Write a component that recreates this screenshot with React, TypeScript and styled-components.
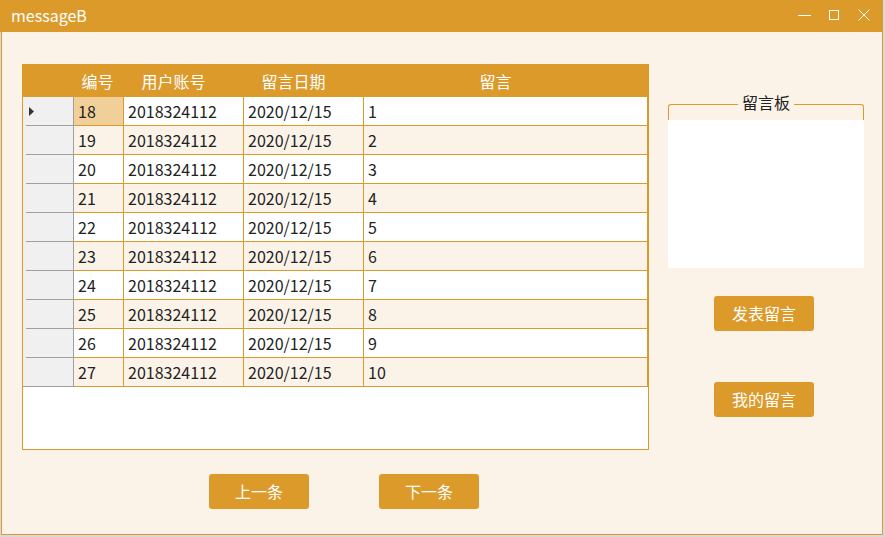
import React from "react";
import styled, { createGlobalStyle } from "styled-components";

const ORANGE = "#dc9a2b";
const CREAM = "#fbf3e8";
const FONT = `"Noto Sans CJK SC", "Noto Sans", sans-serif`;

const Global = createGlobalStyle`
  html, body { margin: 0; padding: 0; background: #d9d9d9; }
  body { font-family: ${FONT}; overflow: hidden; }
  * { box-sizing: border-box; }
`;

const Window = styled.div`
  width: 883px;
  height: 535px;
  display: flex;
  flex-direction: column;
`;

const TitleBar = styled.div`
  height: 32px;
  background: ${ORANGE};
  display: flex;
  align-items: center;
  padding-left: 11px;
  padding-right: 4px;
  color: #fff;
  font-size: 16px;
  flex-shrink: 0;
`;

const Title = styled.div`
  flex: 1;
  line-height: 20px;
  margin-top: -2px;
`;

const Controls = styled.div`
  display: flex;
  align-items: center;
  height: 32px;
`;

const CtrlBtn = styled.div`
  width: 30px;
  height: 30px;
  display: flex;
  align-items: center;
  justify-content: center;
  margin-top: -2px;
`;

const Content = styled.div`
  flex: 1;
  margin-left: 1px;
  background: ${CREAM};
  border: 1px solid ${ORANGE};
  border-top: none;
  display: flex;
  align-items: flex-start;
  padding: 32px 0 0 20px;
  gap: 19px;
`;

const LeftCol = styled.div`
  width: 627px;
  display: flex;
  flex-direction: column;
`;

const Table = styled.div`
  width: 627px;
  height: 386px;
  border: 1px solid ${ORANGE};
  background: #fff;
  display: flex;
  flex-direction: column;
`;

const cols = "51px 50px 120px 120px 284px";

const HeaderRow = styled.div`
  display: grid;
  grid-template-columns: ${cols};
  height: 32px;
  background: ${ORANGE};
`;

const HeadCell = styled.div<{ $pr: number }>`
  color: #fff;
  font-size: 16px;
  display: flex;
  align-items: center;
  justify-content: center;
  padding-right: ${(p) => p.$pr}px;
`;

const Row = styled.div<{ $alt: boolean }>`
  display: grid;
  grid-template-columns: ${cols};
  height: 29px;
  background: ${(p) => (p.$alt ? CREAM : "#fff")};
`;

const RowHead = styled.div<{ $last: boolean }>`
  position: relative;
  background: #f0f0f0;
  border-right: 1px solid #a0a0a0;
  display: flex;
  align-items: center;
  padding-left: 6px;
  &::after {
    content: "";
    position: absolute;
    bottom: 0;
    left: ${(p) => (p.$last ? 0 : 3)}px;
    right: 0;
    height: 1px;
    background: #a0a0a0;
  }
`;

const Cell = styled.div<{ $sel?: boolean }>`
  border-right: 1px solid ${ORANGE};
  border-bottom: 1px solid ${ORANGE};
  background: ${(p) => (p.$sel ? "#f0cf98" : "transparent")};
  color: #222;
  font-size: 16px;
  display: flex;
  align-items: center;
  padding-left: 4px;
  white-space: nowrap;
`;

const NavBar = styled.div`
  display: flex;
  gap: 70px;
  margin-top: 24px;
  padding-left: 187px;
`;

const Button = styled.div`
  width: 100px;
  height: 35px;
  background: ${ORANGE};
  border-radius: 3px;
  color: #fff;
  font-size: 16px;
  display: flex;
  align-items: center;
  justify-content: center;
  padding-bottom: 1px;
`;

const RightCol = styled.div`
  width: 196px;
  display: flex;
  flex-direction: column;
  margin-top: 32px;
`;

const GroupHeader = styled.div`
  display: flex;
  height: 24px;
`;

const Seg = styled.div<{ $side: "l" | "r" }>`
  flex: 1;
  margin-top: 8px;
  height: 16px;
  border-top: 1px solid ${ORANGE};
  ${(p) =>
    p.$side === "l"
      ? `border-left: 1px solid ${ORANGE}; border-top-left-radius: 3px;`
      : `border-right: 1px solid ${ORANGE}; border-top-right-radius: 3px;`}
`;

const Legend = styled.div`
  font-size: 16px;
  line-height: 16px;
  color: #222;
  padding: 0 4px;
  margin-top: -2px;
`;

const TextBox = styled.div`
  height: 148px;
  background: #fff;
`;

const SideButtons = styled.div`
  display: flex;
  flex-direction: column;
  gap: 51px;
  margin-top: 28px;
  padding-left: 46px;
`;

const rows = Array.from({ length: 10 }, (_, i) => ({
  id: 18 + i,
  user: "2018324112",
  date: "2020/12/15",
  msg: String(i + 1),
}));

export default function App() {
  return (
    <>
      <Global />
      <Window>
        <TitleBar>
          <Title>messageB</Title>
          <Controls>
            <CtrlBtn>
              <svg width="13" height="1" viewBox="0 0 13 1">
                <rect x="0" y="0" width="13" height="1" fill="#fff" />
              </svg>
            </CtrlBtn>
            <CtrlBtn>
              <svg width="10" height="10" viewBox="0 0 10 10">
                <rect x="0.5" y="0.5" width="9" height="9" fill="none" stroke="#fff" strokeWidth="1" />
              </svg>
            </CtrlBtn>
            <CtrlBtn>
              <svg width="12" height="12" viewBox="0 0 12 12">
                <path d="M0.5 0.5 L11.5 11.5 M11.5 0.5 L0.5 11.5" stroke="#fff" strokeWidth="1" />
              </svg>
            </CtrlBtn>
          </Controls>
        </TitleBar>
        <Content>
          <LeftCol>
            <Table>
              <HeaderRow>
                <HeadCell $pr={0} />
                <HeadCell $pr={3}>编号</HeadCell>
                <HeadCell $pr={21}>用户账号</HeadCell>
                <HeadCell $pr={21}>留言日期</HeadCell>
                <HeadCell $pr={21}>留言</HeadCell>
              </HeaderRow>
              {rows.map((r, i) => (
                <Row key={r.id} $alt={i % 2 === 1}>
                  <RowHead $last={i === rows.length - 1}>
                    {i === 0 && (
                      <svg width="5" height="9" viewBox="0 0 5 9">
                        <polygon points="0,0 5,4.5 0,9" fill="#333" />
                      </svg>
                    )}
                  </RowHead>
                  <Cell $sel={i === 0}>{r.id}</Cell>
                  <Cell>{r.user}</Cell>
                  <Cell>{r.date}</Cell>
                  <Cell>{r.msg}</Cell>
                </Row>
              ))}
            </Table>
            <NavBar>
              <Button>上一条</Button>
              <Button>下一条</Button>
            </NavBar>
          </LeftCol>
          <RightCol>
            <GroupHeader>
              <Seg $side="l" />
              <Legend>留言板</Legend>
              <Seg $side="r" />
            </GroupHeader>
            <TextBox />
            <SideButtons>
              <Button>发表留言</Button>
              <Button>我的留言</Button>
            </SideButtons>
          </RightCol>
        </Content>
      </Window>
    </>
  );
}
